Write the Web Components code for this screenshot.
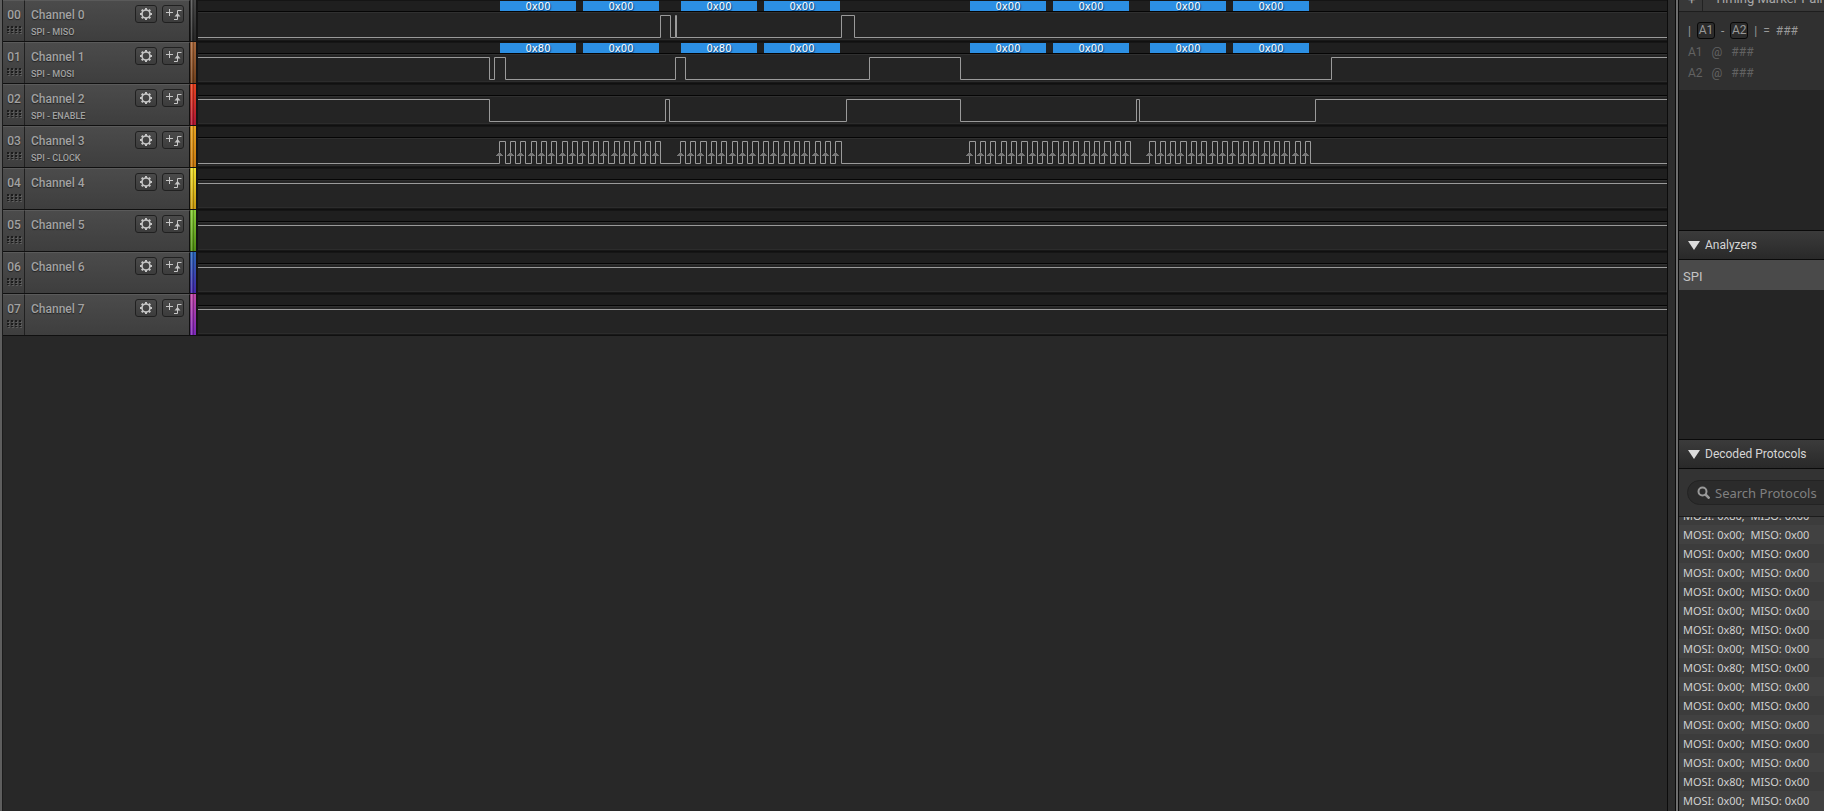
<!DOCTYPE html>
<html lang="en">
<head>
<meta charset="utf-8">
<title>Logic Analyzer</title>
<style>
html, body {
    height: 100%;
    margin: 0;
    overflow: hidden;
    background: #282828;
    font-family: Roboto, "Liberation Sans", sans-serif;
}
</style>
</head>
<body>
<la-app></la-app>

<template id="app">
<style>
:host {
    display: flex;
    height: 100%;
    color: #a2a2a2;
}

.edge {
    width: 2px;
    border-right: 1px solid #1c1c1c;
    background: #5e5e5e;
}

main {
    flex: 1;
    min-width: 0;
}

.splitter {
    width: 7px;
    border: solid #0c0c0c;
    border-width: 0 1px;
    background: #2d2d2d;
}

.rail {
    width: 2px;
    border-right: 1px solid #0c0c0c;
    background: #6e6e6e;
}

aside {
    display: flex;
    flex-direction: column;
    width: 145px;
    overflow: hidden;
    background: #252525;
}

.markers {
    height: 230px;
}

.analyzers {
    height: 209px;
}

.protocols {
    display: flex;
    flex: 1;
    flex-direction: column;
    min-height: 0;
}
</style>
<div class="edge"></div>
<main></main>
<div class="splitter"></div>
<div class="rail"></div>
<aside>
    <la-markers class="markers"></la-markers>
    <la-section class="analyzers" heading="Analyzers">
        <la-analyzer>SPI</la-analyzer>
    </la-section>
    <la-section class="protocols" heading="Decoded Protocols">
        <la-search></la-search>
        <la-results></la-results>
    </la-section>
</aside>
</template>

<template id="channel">
<style>
:host {
    display: flex;
    height: 41px;
    border-bottom: 1px solid #101010;
}

.number, .label {
    box-sizing: border-box;
    border-top: 1px solid #5a5a5a;
    background: linear-gradient(#4b4b4b, #3e3e3e);
    font-weight: 500;
    text-shadow: 0 1px 1px #222;
}

.number {
    width: 22px;
    padding: 6px 0 0 1px;
    border-right: 1px solid #202020;
    font-size: 12px;
    line-height: 16px;
    text-align: center;
}

.number svg {
    display: block;
    margin: 3px auto 0;
}

.label {
    display: flex;
    gap: 5px;
    width: 165px;
    padding: 4px 5px 0 6px;
    border-right: 1px solid #101010;
}

.names {
    flex: 1;
    padding-top: 1px;
    font-size: 12px;
    line-height: 18px;
    white-space: nowrap;
}

.role {
    font-size: 9px;
    line-height: 16px;
}

button {
    display: flex;
    align-items: center;
    justify-content: center;
    width: 22px;
    height: 18px;
    padding: 0;
    border: 1px solid #202020;
    border-radius: 3px;
    background: linear-gradient(#4a4a4a, #3c3c3c);
    color: #c6c6c6;
}

button svg {
    flex: none;
}

.color {
    width: 6px;
    border-right: 2px solid #141414;
    background: linear-gradient(90deg, #0003 0 1px, #fff3 1px 2px, #0000 2px 3px, #0004 3px 4px, #0000 4px),
        linear-gradient(var(--top), var(--bottom));
}

la-trace {
    flex: 1;
    min-width: 0;
}
</style>
<div class="number">
    <span id="number"></span>
    <svg width="15" height="9">
        <path fill="#5c5c5c" d="M1 1h2v2h-2zM5 1h2v2h-2zM9 1h2v2h-2zM13 1h2v2h-2zM1 4h2v2h-2zM5 4h2v2h-2zM9 4h2v2h-2zM13 4h2v2h-2zM1 7h2v1h-2zM5 7h2v1h-2zM9 7h2v1h-2zM13 7h2v1h-2z"/>
        <path fill="#1c1c1c" d="M0 0h2v2h-2zM4 0h2v2h-2zM8 0h2v2h-2zM12 0h2v2h-2zM0 3h2v2h-2zM4 3h2v2h-2zM8 3h2v2h-2zM12 3h2v2h-2zM0 6h2v1h-2zM4 6h2v1h-2zM8 6h2v1h-2zM12 6h2v1h-2z"/>
    </svg>
</div>
<div class="label">
    <div class="names">
        <div id="name"></div>
        <div id="role" class="role"></div>
    </div>
    <button aria-label="Channel settings">
        <svg width="14" height="14" viewBox="-7 -7 14 14" fill="none" stroke="currentColor">
            <circle r="4" stroke-width="1.600"/>
            <path stroke-width="2" d="M0-4v-2M0 4v2M-4 0h-2M4 0h2M3-3l1.300-1.300M3 3l1.300 1.300M-3-3l-1.300-1.300M-3 3l-1.300 1.300"/>
        </svg>
    </button>
    <button aria-label="Add trigger">
        <svg width="18" height="14" fill="none" stroke="currentColor">
            <path d="M2 5.500h7M5.500 2v7M10 12.500h3.500v-9h4"/>
            <path fill="currentColor" stroke="none" d="M10.500 9.500l3-3.500 3 3.500z"/>
        </svg>
    </button>
</div>
<div class="color"></div>
<la-trace></la-trace>
</template>

<template id="trace">
<style>
:host {
    position: relative;
    display: block;
    overflow: hidden;
    background: linear-gradient(#151515 0 1px, #1f1f1f 1px 11px, #050505 11px 12px, #303030 12px 13px, #242424 13px 39px, #2c2c2c 39px 40px, #181818 40px);
}

svg {
    display: block;
    width: 100%;
    height: 41px;
}

.wave {
    fill: none;
    stroke: #9a9a9a;
}

.arrows {
    fill: #777;
}

.byte {
    position: absolute;
    top: 1px;
    width: 76px;
    height: 10px;
    background: #2c8fe3;
    color: #fff;
    font: 10px/11px "DejaVu Sans", sans-serif;
    text-align: center;
    text-shadow: 1px 1px 1px #0a3c70;
}
</style>
<svg><path class="wave"/><path class="arrows"/></svg>
</template>

<template id="section">
<style>
:host {
    display: block;
}

h2 {
    display: flex;
    flex: none;
    align-items: center;
    gap: 5px;
    box-sizing: border-box;
    height: 30px;
    margin: 0;
    padding: 1px 0 0 9px;
    border: solid #0a0a0a;
    border-width: 1px 0;
    background: linear-gradient(#3b3b3b, #292929);
    color: #d6d6d6;
    font-size: 12px;
    font-weight: 400;
    line-height: 15px;
    white-space: nowrap;
}
</style>
<h2><svg width="12" height="9" fill="#ddd"><path d="M0 0h12l-6 9z"/></svg><span></span></h2>
<slot></slot>
</template>

<template id="analyzer">
<style>
:host {
    display: block;
    padding: 3px 0 0 4px;
    background: #4a4a4a;
    color: #c4c4c4;
    font-size: 13px;
    line-height: 27px;
}
</style>
<slot></slot>
</template>

<template id="markers">
<style>
:host {
    display: block;
    overflow: hidden;
    font-size: 12px;
    white-space: nowrap;
}

.bar {
    display: flex;
    align-items: flex-end;
    height: 11px;
    border-bottom: 1px solid #1e1e1e;
    background: #383838;
    color: #a8a8a8;
    font-size: 13px;
    line-height: 24px;
}

.add {
    width: 30px;
    height: 11px;
    border-right: 1px solid #222;
    line-height: 0;
    text-indent: 9px;
}

.title {
    padding-left: 11px;
}

.body {
    height: 70px;
    padding: 8px 0 0 9px;
    background: #303030;
    color: #626262;
}

.row {
    display: flex;
    align-items: center;
    gap: 9px;
    height: 21px;
}

.delta {
    gap: 6px;
    color: #999;
}

.tag {
    box-sizing: border-box;
    width: 18px;
    border: 1px solid #080808;
    border-radius: 3px;
    background: #2b2b2b;
    line-height: 15px;
    text-align: center;
}
</style>
<div class="bar"><span class="add">+</span><span class="title">Timing Marker Pair</span></div>
<div class="body">
    <div class="row delta"><span>|</span><span class="tag">A1</span><span>-</span><span class="tag">A2</span><span>|</span><span>=</span><span>###</span></div>
    <div class="row"><span>A1</span><span>@</span><span>###</span></div>
    <div class="row"><span>A2</span><span>@</span><span>###</span></div>
</div>
</template>

<template id="search">
<style>
:host {
    display: block;
    flex: none;
    padding: 11px 0 11px 8px;
    border-bottom: 1px solid #1c1c1c;
    background: #333;
}

label {
    display: flex;
    align-items: center;
    gap: 5px;
    box-sizing: border-box;
    width: 180px;
    height: 25px;
    padding-left: 9px;
    border: 1px solid #232323;
    border-radius: 13px;
    background: #2b2b2b;
}

input {
    width: 140px;
    padding: 0;
    border: 0;
    outline: 0;
    background: none;
    color: #bbb;
    font: 13px "Noto Sans", sans-serif;
}

input::placeholder {
    color: #808080;
}
</style>
<label>
    <svg width="13" height="13" fill="none" stroke="#999"><circle cx="5.500" cy="5.500" r="4" stroke-width="2"/><path stroke-width="2.500" d="M8.500 8.500l4 4"/></svg>
    <input type="text" aria-label="Search protocols" placeholder="Search Protocols">
</label>
</template>

<template id="results">
<style>
:host {
    display: flex;
    flex: 1;
    flex-direction: column;
    justify-content: flex-end;
    padding-bottom: 1px;
    overflow: hidden;
    background: #414141;
    color: #d0d0d0;
    font: 11px/19px "Noto Sans", sans-serif;
}

div {
    flex: none;
    height: 19px;
    padding-left: 4px;
    white-space: pre;
}

div:nth-child(even) {
    background: #3c3c3c;
}
</style>
</template>

<script>
// x positions count from the left edge of the trace
const BYTES_X = [302, 385, 483, 566, 772, 855, 952, 1035]

const CLOCK = [
    301, 307, 312, 317, 322, 327, 333, 338, 343, 348, 353, 358, 364, 369, 374, 379,
    384, 390, 395, 400, 405, 410, 416, 421, 426, 431, 436, 442, 447, 452, 457, 462,
    482, 487, 492, 497, 502, 508, 513, 518, 523, 528, 534, 539, 544, 549, 554, 560,
    565, 570, 575, 580, 586, 591, 596, 601, 606, 611, 617, 622, 627, 632, 637, 643,
    771, 777, 782, 787, 792, 797, 803, 808, 813, 818, 823, 829, 834, 839, 844, 849,
    854, 860, 865, 870, 875, 880, 886, 891, 896, 901, 906, 912, 917, 922, 927, 932,
    951, 957, 962, 967, 972, 977, 982, 988, 993, 998, 1003, 1008, 1014, 1019, 1024, 1029,
    1034, 1040, 1045, 1050, 1055, 1060, 1066, 1071, 1076, 1081, 1086, 1091, 1097, 1102, 1107, 1112
]

const CHANNELS = [
    {role: "SPI - MISO", colors: ["#484848", "#262626"], start: 0, edges: [462, 472, 477, 478, 643, 656],
        bytes: ["0x00", "0x00", "0x00", "0x00", "0x00", "0x00", "0x00", "0x00"]},
    {role: "SPI - MOSI", colors: ["#a8683c", "#70401c"], start: 1, edges: [291, 296, 307, 477, 487, 671, 762, 1133],
        bytes: ["0x80", "0x00", "0x80", "0x00", "0x00", "0x00", "0x00", "0x00"]},
    {role: "SPI - ENABLE", colors: ["#e84420", "#b01634"], start: 1, edges: [291, 467, 471, 648, 762, 938, 941, 1117]},
    {role: "SPI - CLOCK", colors: ["#e8a420", "#c87810"], start: 0, edges: CLOCK, arrows: true},
    {colors: ["#f0e030", "#c89810"], start: 1},
    {colors: ["#88cc38", "#508c14"], start: 1},
    {colors: ["#2c68b8", "#4428a8"], start: 1},
    {colors: ["#c048a8", "#7c28b8"], start: 1}
]

const RESULTS = ["80", "00", "00", "00", "00", "00", "80", "00", "80", "00", "00", "00", "00", "00", "80", "00"]

class BaseElement extends HTMLElement {

    constructor(){
        super()
        this.attachShadow({mode: "open"})
        let template = document.getElementById(this.localName.replace("la-", ""))
        this.shadowRoot.appendChild(template.content.cloneNode(true))
    }

    find(selector){
        return this.shadowRoot.querySelector(selector)
    }
}

class TraceElement extends BaseElement {

    set channel({start, edges = [], bytes = [], arrows}){
        let high = start == 1
        let path = `M-1 ${high ? 15.5 : 37.5}`

        for(let x of edges){
            high = !high
            path += `H${x + 0.5}V${high ? 15.5 : 37.5}`
        }

        this.find(".wave").setAttribute("d", path + "H9999")

        if(arrows){
            // rising edges are sampled
            let marks = edges.filter((x, i) => i % 2 == 0)
                .map(x => `M${x - 3} 30h7v-1h-1v-1h-1v-1h-1v-1h-1v1h-1v1h-1v1h-1z`)
            this.find(".arrows").setAttribute("d", marks.join(""))
        }

        bytes.forEach((value, i) => {
            let el = document.createElement("div")
            el.className = "byte"
            el.style.left = BYTES_X[i] + "px"
            el.textContent = value
            this.shadowRoot.appendChild(el)
        })
    }
}

class ChannelElement extends BaseElement {

    show(channel, index){
        this.find("#number").textContent = "0" + index
        this.find("#name").textContent = "Channel " + index
        this.find("#role").textContent = channel.role || ""
        this.style.setProperty("--top", channel.colors[0])
        this.style.setProperty("--bottom", channel.colors[1])
        this.find("la-trace").channel = channel
    }
}

class SectionElement extends BaseElement {

    connectedCallback(){
        this.find("h2 span").textContent = this.getAttribute("heading")
    }
}

class AnalyzerElement extends BaseElement {}

class MarkersElement extends BaseElement {}

class SearchElement extends BaseElement {}

class ResultsElement extends BaseElement {

    connectedCallback(){
        for(let mosi of RESULTS){
            let el = document.createElement("div")
            el.textContent = `MOSI: 0x${mosi};  MISO: 0x00`
            this.shadowRoot.appendChild(el)
        }
    }
}

class AppElement extends BaseElement {

    connectedCallback(){
        CHANNELS.forEach((channel, i) => {
            let el = document.createElement("la-channel")
            this.find("main").appendChild(el)
            el.show(channel, i)
        })
    }
}

customElements.define("la-trace", TraceElement)
customElements.define("la-channel", ChannelElement)
customElements.define("la-section", SectionElement)
customElements.define("la-analyzer", AnalyzerElement)
customElements.define("la-markers", MarkersElement)
customElements.define("la-search", SearchElement)
customElements.define("la-results", ResultsElement)
customElements.define("la-app", AppElement)
</script>
</body>
</html>
